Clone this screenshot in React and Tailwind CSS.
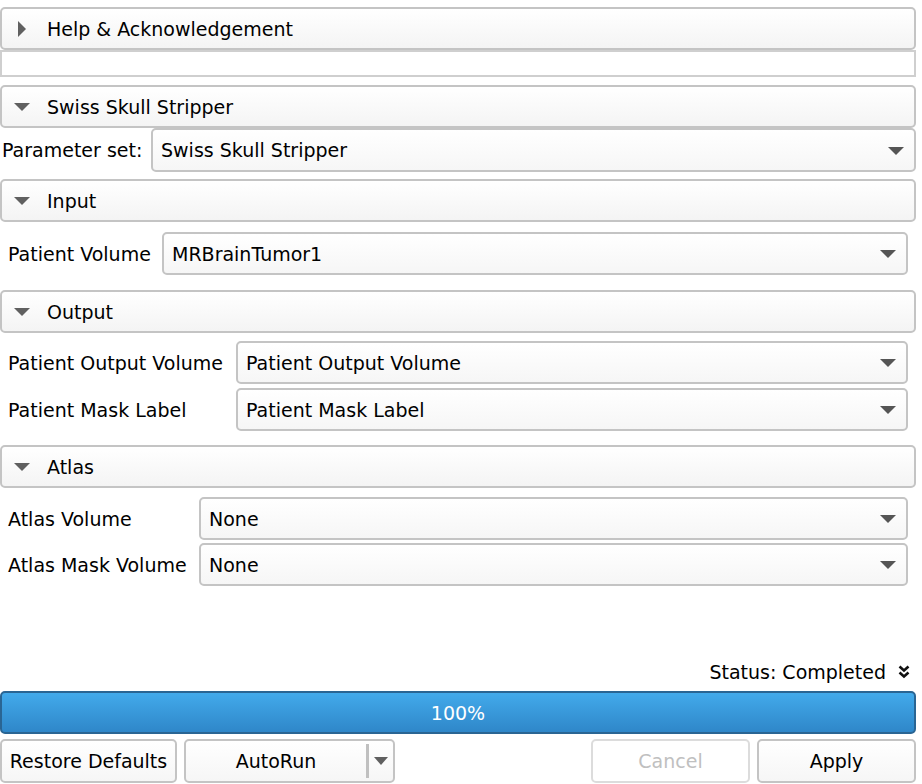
import React from 'react';

const font = { fontFamily: '"DejaVu Sans", Tahoma, sans-serif' };

const Caret = ({ open }) =>
    open ? (
        <svg width="16" height="8" viewBox="0 0 16 8" className="shrink-0"><path d="M0 0h16L8 8z" fill="#606060" /></svg>
    ) : (
        <svg width="8" height="16" viewBox="0 0 8 16" className="shrink-0"><path d="M0 0l8 8-8 8z" fill="#606060" /></svg>
    );

const Header = ({ title, open = true, className = '' }) => (
    <div className={`h-[43px] shrink-0 flex items-center border-2 border-[#c4c4c4] rounded-[5px] bg-gradient-to-b from-white to-[#f4f4f4] pt-[1px] ${open ? 'pl-[12px]' : 'pl-[16px]'} ${className}`}>
        <Caret open={open} />
        <span className={open ? 'ml-[17px]' : 'ml-[21px]'}>{title}</span>
    </div>
);

const Combo = ({ value, className = 'h-[43px]' }) => (
    <div className={`flex-1 flex items-center justify-between border-2 border-[#c4c4c4] rounded-[5px] bg-gradient-to-b from-white to-[#f6f6f6] pl-[8px] pr-[10px] pt-[1px] ${className}`}>
        <span>{value}</span>
        <svg width="16" height="8" viewBox="0 0 16 8"><path d="M0 0h16L8 8z" fill="#555" /></svg>
    </div>
);

const Row = ({ label, value, labelW }) => (
    <div className="flex items-center">
        <span className={`shrink-0 pt-[1px] ${labelW}`}>{label}</span>
        <Combo value={value} />
    </div>
);

export default function App() {
    return (
        <div style={font} className="w-[916px] h-screen flex flex-col text-[19px] text-black bg-white">
            <Header title="Help & Acknowledgement" open={false} className="mt-[7px]" />
            <div className="h-[27px] shrink-0 border-2 border-[#cfcfcf]" />

            <Header title="Swiss Skull Stripper" className="mt-[8px]" />
            <div className="flex items-center">
                <span className="shrink-0 pl-[2px] pt-[1px] w-[151px]">Parameter set:</span>
                <Combo value="Swiss Skull Stripper" className="h-[44px]" />
            </div>

            <Header title="Input" className="mt-[7px]" />
            <div className="px-[8px] mt-[10px]">
                <Row label="Patient Volume" value="MRBrainTumor1" labelW="w-[154px]" />
            </div>

            <Header title="Output" className="mt-[15px]" />
            <div className="px-[8px] mt-[8px] flex flex-col gap-[4px]">
                <Row label="Patient Output Volume" value="Patient Output Volume" labelW="w-[228px]" />
                <Row label="Patient Mask Label" value="Patient Mask Label" labelW="w-[228px]" />
            </div>

            <Header title="Atlas" className="mt-[14px]" />
            <div className="px-[8px] mt-[9px] flex flex-col gap-[3px]">
                <Row label="Atlas Volume" value="None" labelW="w-[191px]" />
                <Row label="Atlas Mask Volume" value="None" labelW="w-[191px]" />
            </div>

            <div className="flex-1" />

            <div className="flex items-center justify-end h-[26px] pr-[6px]">
                <span>Status: Completed</span>
                <svg width="12" height="16" viewBox="0 0 12 16" className="ml-[12px]">
                    <path d="M1.5 2.5l4.5 4 4.5-4M1.5 8.5l4.5 4 4.5-4" stroke="#111" strokeWidth="2.6" fill="none" />
                </svg>
            </div>

            <div className="mt-[6px] h-[43px] shrink-0 border-2 border-[#2a6593] rounded-[5px] bg-gradient-to-b from-[#42aaeb] to-[#2f87c9] flex items-center justify-center text-white pt-[1px]">
                100%
            </div>

            <div className="mt-[5px] mb-[1px] flex items-stretch h-[44px] shrink-0">
                <button className="w-[177px] border-2 border-[#c4c4c4] rounded-[5px] bg-gradient-to-b from-white to-[#f6f6f6] pt-[1px]">Restore Defaults</button>
                <div className="ml-[7px] w-[211px] flex border-2 border-[#c4c4c4] rounded-[5px] bg-gradient-to-b from-white to-[#f6f6f6]">
                    <span className="flex-1 flex items-center justify-center pt-[1px]">AutoRun</span>
                    <div className="w-[3px] my-[3px] bg-[#c0c0c0]" />
                    <div className="w-[24px] flex items-center justify-center">
                        <svg width="14" height="8" viewBox="0 0 14 8"><path d="M0 0h14L7 8z" fill="#606060" /></svg>
                    </div>
                </div>
                <div className="flex-1" />
                <button className="w-[159px] border-2 border-[#dcdcdc] rounded-[5px] bg-white text-[#c0c0c0] pt-[1px]">Cancel</button>
                <button className="ml-[7px] w-[159px] border-2 border-[#c4c4c4] rounded-[5px] bg-gradient-to-b from-white to-[#f6f6f6] pt-[1px]">Apply</button>
            </div>
        </div>
    );
}
